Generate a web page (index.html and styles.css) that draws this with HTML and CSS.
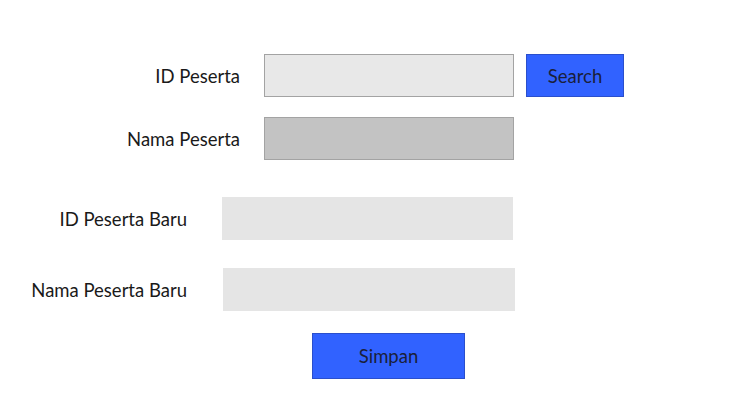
FILE: index.html
```html
<!DOCTYPE html>
<html>
<head>
<meta charset="utf-8">
<link rel="stylesheet" href="styles.css">
</head>
<body>
<div class="page">
  <div class="form-a">
    <label class="label">ID Peserta</label>
    <div class="field field-light"></div>
    <button class="btn btn-search">Search</button>
    <label class="label">Nama Peserta</label>
    <div class="field field-dark"></div>
  </div>
  <div class="form-b">
    <label class="label">ID Peserta Baru</label>
    <div class="field-flat"></div>
    <label class="label">Nama Peserta Baru</label>
    <div class="field-flat shift"></div>
  </div>
  <button class="btn btn-save">Simpan</button>
</div>
</body>
</html>
```

FILE: styles.css
```css
* { box-sizing: border-box; }
html, body { margin: 0; padding: 0; background: #ffffff; }
body {
  font-family: Lato, "Noto Sans", sans-serif;
  color: #1a1a1a;
  width: 738px;
  height: 416px;
  overflow: hidden;
}
.page {
  padding-top: 54px;
  display: flex;
  flex-direction: column;
}
.label {
  font-size: 18.5px;
  text-align: right;
  align-self: center;
  white-space: nowrap;
}
.form-a {
  display: grid;
  grid-template-columns: 252px 250px 98px;
  grid-auto-rows: 43px;
  column-gap: 12px;
  row-gap: 20px;
}
.form-a .label { padding-right: 12px; }
.field {
  height: 43px;
  border: 1px solid #a3a3a3;
}
.field-light { background: #e8e8e8; }
.field-dark { background: #c3c3c3; }
.btn {
  font-family: Lato, "Noto Sans", sans-serif;
  font-size: 18.5px;
  color: #1a1f3a;
  background: #3162ff;
  border: 1px solid #2a4fcc;
  padding: 0;
  cursor: pointer;
}
.btn-search { height: 43px; }
.form-b {
  margin-top: 37px;
  display: grid;
  grid-template-columns: 187px 291px;
  grid-auto-rows: 43px;
  column-gap: 35px;
  row-gap: 28px;
}
.field-flat {
  background: #e5e5e5;
  height: 43px;
}
.field-flat.shift { margin-left: 1px; width: 292px; }
.btn-save {
  margin-top: 22px;
  margin-left: 312px;
  width: 153px;
  height: 46px;
}
```
